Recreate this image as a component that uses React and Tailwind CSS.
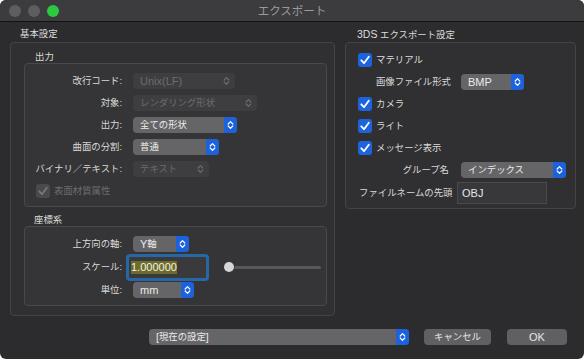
import React from 'react'

const FONT = "font-['Liberation_Sans','Noto_Sans_CJK_JP',sans-serif]"

// latin text renders larger than the kana next to it
function L({ children }) {
  return <span className="text-[11px]">{children}</span>
}

function Chevrons({ color = '#ffffff' }) {
  return (
    <svg width="7" height="10" viewBox="0 0 7 10" fill="none">
      <path d="M1.2 4 L3.5 1.7 L5.8 4" stroke={color} strokeWidth="1.2" strokeLinecap="round" strokeLinejoin="round" />
      <path d="M1.2 6 L3.5 8.3 L5.8 6" stroke={color} strokeWidth="1.2" strokeLinecap="round" strokeLinejoin="round" />
    </svg>
  )
}

function Popup({ value, className = '', disabled = false }) {
  if (disabled) {
    return (
      <div className={`flex h-[16px] items-center rounded-[4px] bg-[#3e3e40] pl-[7px] pr-[5px] ${className}`}>
        <span className="flex-1 truncate text-[#6c6c6e]">{value}</span>
        <Chevrons color="#6c6c6e" />
      </div>
    )
  }
  return (
    <div className={`flex h-[16px] overflow-hidden rounded-[4px] bg-[#656567] ${className}`}>
      <span className="flex flex-1 items-center truncate pl-[7px] text-[#ececec]">{value}</span>
      <div className="flex w-[13px] items-center justify-center bg-[#1b62dc]">
        <Chevrons />
      </div>
    </div>
  )
}

function Check({ disabled = false }) {
  return (
    <div className={`flex h-[14px] w-[14px] items-center justify-center rounded-[3px] ${disabled ? 'bg-[#4a4a4c]' : 'bg-[#1d63de]'}`}>
      <svg width="14" height="14" viewBox="0 0 14 14" fill="none">
        <path d="M3.3 7.3 L6 10.2 L10.8 3.8" stroke={disabled ? '#78787a' : '#ffffff'} strokeWidth="1.8" strokeLinecap="round" strokeLinejoin="round" />
      </svg>
    </div>
  )
}

function Row({ label, children }) {
  return (
    <div className="flex h-[22px] items-center">
      <span className="w-[97px] text-right text-[#d9d9d9]">{label}</span>
      <div className="ml-[11px]">{children}</div>
    </div>
  )
}

function CheckRow({ label }) {
  return (
    <div className="flex h-[22px] items-center pl-[12px]">
      <Check />
      <span className="ml-[4px] text-[#dcdcdc]">{label}</span>
    </div>
  )
}

export default function App() {
  return (
    <div className={`h-[359px] w-[584px] bg-white text-[9.4px] leading-[12px] ${FONT}`}>
      <div className="flex h-full w-full flex-col overflow-hidden rounded-[6px] bg-[#2c2c2e]">
        {/* title bar */}
        <div className="relative flex h-[22px] items-center border-b border-[#121213] bg-[#3c3c3e] pl-[9px]">
          <div className="flex gap-[7px]">
            <span className="h-[12px] w-[12px] rounded-full bg-[#5e5e60]" />
            <span className="h-[12px] w-[12px] rounded-full bg-[#5e5e60]" />
            <span className="h-[12px] w-[12px] rounded-full bg-[#2ac940]" />
          </div>
          <div className="absolute inset-0 flex items-center justify-center text-[11.5px] text-[#9a9a9c]">エクスポート</div>
        </div>

        <div className="flex pl-[10px] pt-[6px]">
          {/* left column */}
          <div className="flex w-[325px] flex-col">
            <div className="h-[14px] pl-[10px] text-[#dcdcdc]">基本設定</div>
            <div className="flex flex-col rounded-[4px] border border-[#444446] bg-[#303032] pb-[9px] pl-[13px] pr-[7px] pt-[8px]">
              <div className="h-[12px] pl-[11px] text-[#dcdcdc]">出力</div>
              <div className="flex flex-col rounded-[4px] border border-[#49494b] bg-[#353537] pb-[4px] pt-[6px]">
                <Row label="改行コード:"><Popup value={<L>Unix(LF)</L>} disabled className="w-[102px]" /></Row>
                <Row label="対象:"><Popup value="レンダリング形状" disabled className="w-[124px]" /></Row>
                <Row label="出力:"><Popup value="全ての形状" className="w-[104px]" /></Row>
                <Row label="曲面の分割:"><Popup value="普通" className="w-[86px]" /></Row>
                <Row label="バイナリ／テキスト:"><Popup value="テキスト" disabled className="w-[76px]" /></Row>
                <div className="flex h-[22px] items-center pl-[11px]">
                  <Check disabled />
                  <span className="ml-[4px] text-[#6c6c6e]">表面材質属性</span>
                </div>
              </div>

              <div className="mt-[7px] h-[12px] pl-[10px] text-[#dcdcdc]">座標系</div>
              <div className="flex flex-col rounded-[4px] border border-[#49494b] bg-[#353537] pb-[4px] pt-[6px]">
                <Row label="上方向の軸:"><Popup value={<><L>Y</L>軸</>} className="w-[56px]" /></Row>
                <div className="flex h-[24px] items-center">
                  <span className="w-[97px] text-right text-[#d9d9d9]">スケール:</span>
                  <div className="ml-[4px] h-[27px] w-[83px] rounded-[4px] bg-[#2767a6] p-[3px]">
                    <div className="flex h-full items-center rounded-[1px] bg-[#3a3a3c] pl-[2px]">
                      <span className="bg-[#6c6c2c] text-[11px] leading-[13px] text-[#f2f2e2]">1.000000</span>
                    </div>
                  </div>
                  <div className="ml-[15px] flex w-[97px] items-center">
                    <span className="h-[10px] w-[10px] rounded-full bg-[#d6d6d6]" />
                    <span className="h-[3px] flex-1 rounded-full bg-[#58585a]" />
                  </div>
                </div>
                <Row label="単位:"><Popup value={<L>mm</L>} className="w-[61px]" /></Row>
              </div>
            </div>
          </div>

          {/* right column */}
          <div className="ml-[10px] flex w-[231px] flex-col">
            <div className="h-[14px] pl-[12px] text-[#dcdcdc]"><span className="text-[10.5px]">3DS</span> エクスポート設定</div>
            <div className="flex flex-col rounded-[4px] border border-[#444446] bg-[#303032] pb-[3px] pt-[6px]">
              <CheckRow label="マテリアル" />
              <div className="flex h-[22px] items-center pl-[13px]">
                <span className="w-[92px] text-right text-[#d9d9d9]">画像ファイル形式</span>
                <Popup value={<L>BMP</L>} className="ml-[10px] w-[63px]" />
              </div>
              <CheckRow label="カメラ" />
              <CheckRow label="ライト" />
              <CheckRow label="メッセージ表示" />
              <div className="flex h-[22px] items-center pl-[13px]">
                <span className="w-[90px] text-right text-[#d9d9d9]">グループ名</span>
                <Popup value="インデックス" className="ml-[12px] w-[105px]" />
              </div>
              <div className="flex h-[24px] items-center pl-[13px]">
                <span className="w-[94px] whitespace-nowrap text-[#d9d9d9]">ファイルネームの先頭</span>
                <div className="ml-[4px] flex h-[22px] w-[90px] items-center border border-[#4a4a4c] bg-[#38383a] pl-[4px] text-[11px] text-[#e6e6e6]">OBJ</div>
              </div>
            </div>
          </div>
        </div>

        {/* bottom row */}
        <div className="mt-[10px] flex h-[22px] items-center pl-[149px]">
          <Popup value={<><span className="text-[10.5px]">[</span>現在の設定<span className="text-[10.5px]">]</span></>} className="w-[260px]" />
          <button className="ml-[15px] h-[16px] w-[67px] rounded-[4px] bg-[#606062] text-[#e6e6e6]">キャンセル</button>
          <button className="ml-[16px] h-[16px] w-[60px] rounded-[4px] bg-[#606062] text-[11px] text-[#e6e6e6]">OK</button>
        </div>
      </div>
    </div>
  )
}
